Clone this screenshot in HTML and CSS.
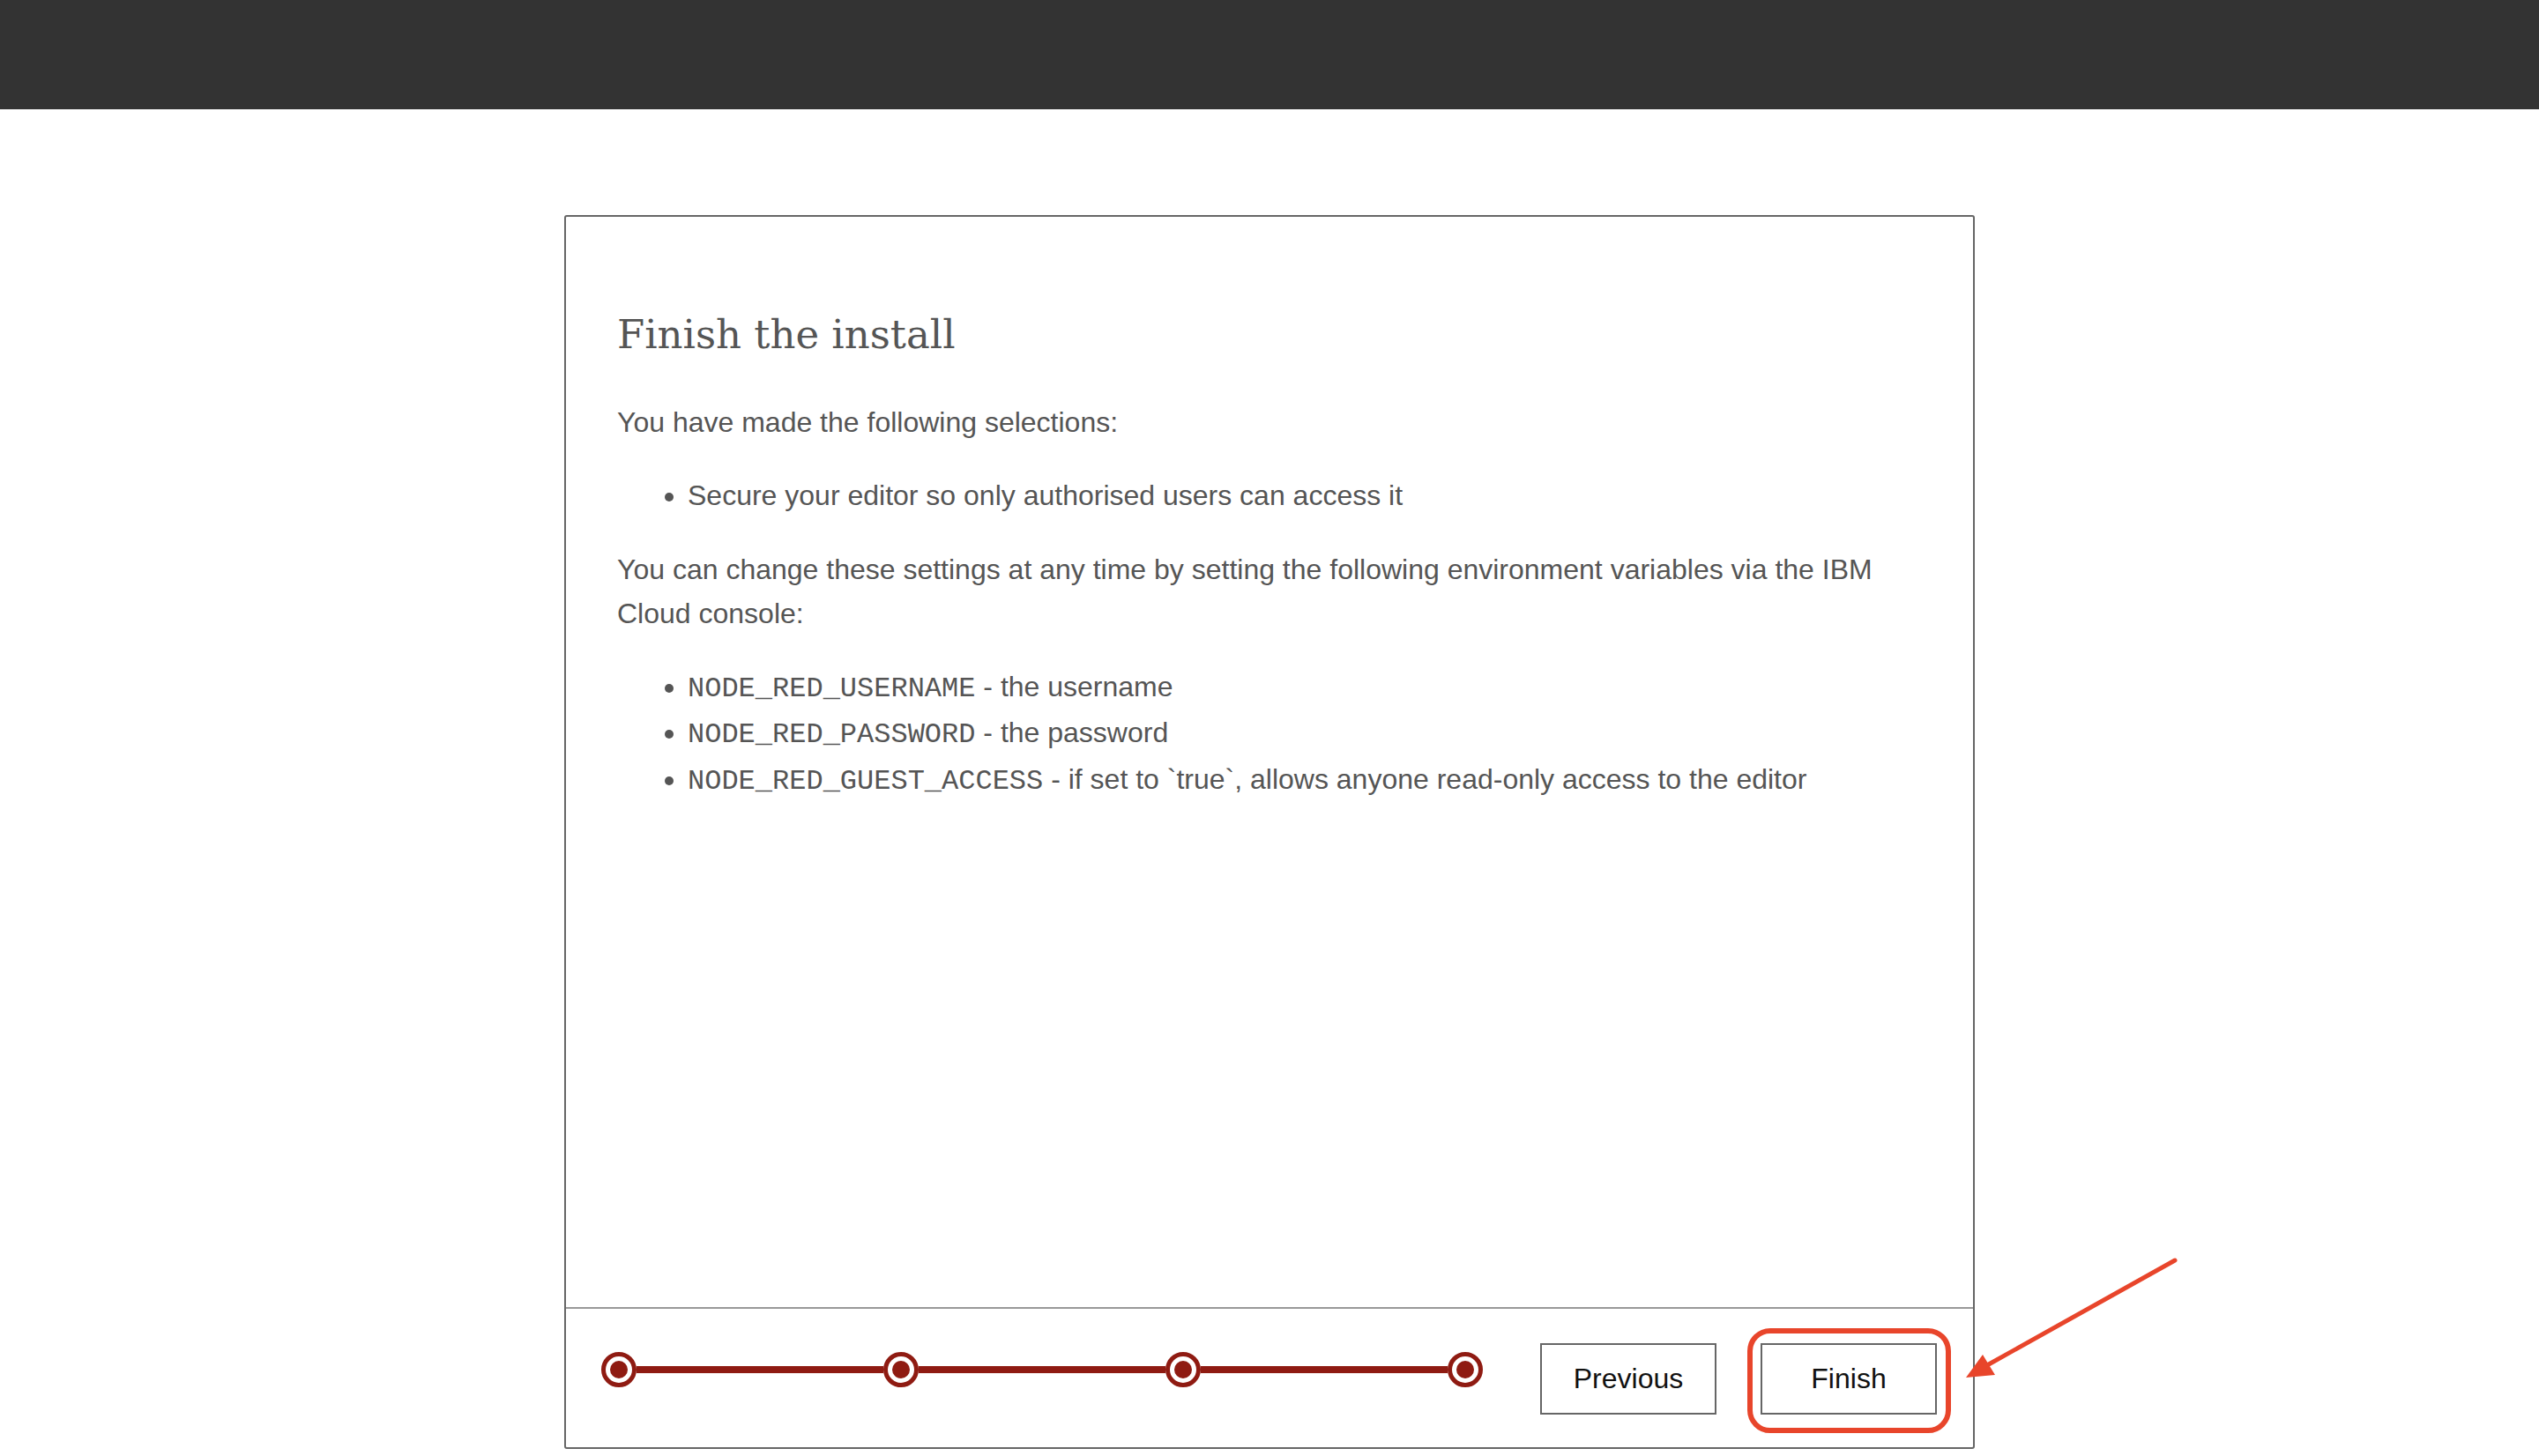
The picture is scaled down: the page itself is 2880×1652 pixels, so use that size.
FILE: index.html
```html
<!DOCTYPE html>
<html lang="en">
<head>
<meta charset="utf-8">
<title>Finish the install</title>
<link rel="stylesheet" href="styles.css">
</head>
<body>
<header class="topbar"></header>
<main class="page">
  <section class="dialog">
    <div class="dialog-body">
      <h1 class="title">Finish the install</h1>
      <p class="text">You have made the following selections:</p>
      <ul class="list">
        <li>Secure your editor so only authorised users can access it</li>
      </ul>
      <p class="text">You can change these settings at any time by setting the following environment variables via the IBM Cloud console:</p>
      <ul class="list list-env">
        <li><code class="code">NODE_RED_USERNAME</code> - the username</li>
        <li><code class="code">NODE_RED_PASSWORD</code> - the password</li>
        <li><code class="code">NODE_RED_GUEST_ACCESS</code> - if set to `true`, allows anyone read-only access to the editor</li>
      </ul>
    </div>
    <div class="dialog-footer">
      <div class="progress">
        <span class="step"></span><span class="link"></span>
        <span class="step"></span><span class="link"></span>
        <span class="step"></span><span class="link"></span>
        <span class="step"></span>
      </div>
      <div class="actions">
        <button class="btn" type="button">Previous</button>
        <div class="highlight-wrap">
          <button class="btn" type="button">Finish</button>
          <span class="highlight"></span>
          <svg class="arrow" width="247" height="145" viewBox="0 0 247 145" xmlns="http://www.w3.org/2000/svg">
            <line x1="243" y1="5" x2="30" y2="124" stroke="#e8452b" stroke-width="5" stroke-linecap="round"/>
            <polygon points="6,138 25,112 39,135" fill="#e8452b"/>
          </svg>
        </div>
      </div>
    </div>
  </section>
</main>
</body>
</html>
```

FILE: styles.css
```css
html, body {
  margin: 0;
  padding: 0;
  background: #ffffff;
}

body {
  font-family: "Liberation Sans", Arial, sans-serif;
  color: #555555;
}

.topbar {
  height: 124px;
  background: #333333;
}

.page {
  padding-top: 120px;
}

.dialog {
  box-sizing: border-box;
  width: 1600px;
  height: 1400px;
  margin: 0 auto;
  border: 2px solid #666666;
  border-radius: 3px;
  display: flex;
  flex-direction: column;
}

.dialog-body {
  flex: 1;
  padding: 104px 58px 0 58px;
}

.title {
  margin: 0 0 44px 0;
  font-family: "DejaVu Serif", "Liberation Serif", serif;
  font-weight: normal;
  font-size: 45px;
  line-height: 60px;
  color: #555555;
}

.text {
  margin: 0 0 32px 0;
  font-size: 32px;
  line-height: 50px;
}

.list {
  margin: 0 0 32px 0;
  padding-left: 80px;
  font-size: 32px;
  line-height: 52.5px;
}

.code {
  font-family: "Liberation Mono", "Courier New", monospace;
  font-size: 32px;
  line-height: 1;
  color: #555555;
}

.dialog-footer {
  box-sizing: border-box;
  flex: none;
  height: 159px;
  border-top: 2px solid #999999;
  display: flex;
  align-items: flex-start;
  padding: 39px 41px 0 40px;
}

.progress {
  width: 1000px;
  margin-top: 10px;
  display: flex;
  align-items: center;
}

.step {
  box-sizing: border-box;
  flex: none;
  width: 40px;
  height: 40px;
  border-radius: 50%;
  border: 5px solid #8f1b12;
  background: #ffffff;
  display: flex;
  align-items: center;
  justify-content: center;
}

.step::after {
  content: "";
  width: 20px;
  height: 20px;
  border-radius: 50%;
  background: #8f1b12;
}

.link {
  flex: 1;
  height: 8px;
  background: #8f1b12;
}

.actions {
  margin-left: auto;
  display: flex;
  gap: 50px;
}

.btn {
  box-sizing: border-box;
  width: 200px;
  height: 81px;
  border: 2px solid #666666;
  border-radius: 0;
  background: #ffffff;
  color: #111111;
  font-family: "Liberation Sans", Arial, sans-serif;
  font-size: 32px;
  padding: 0;
}

.highlight-wrap {
  position: relative;
}

.highlight {
  position: absolute;
  top: -17px;
  left: -15px;
  right: -16px;
  bottom: -21px;
  border: 6px solid #e8452b;
  border-radius: 26px;
  pointer-events: none;
}

.arrow {
  position: absolute;
  left: 227px;
  top: -99px;
  overflow: visible;
}
```
